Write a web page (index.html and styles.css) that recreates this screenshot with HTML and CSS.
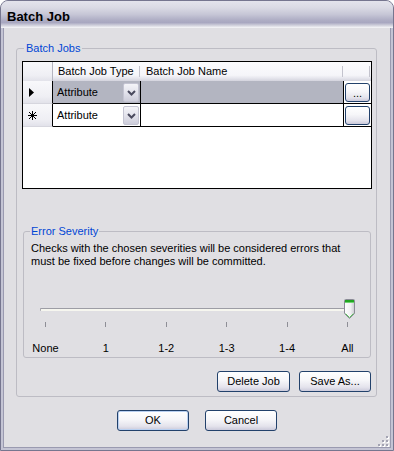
FILE: index.html
```html
<!DOCTYPE html>
<html lang="en">
<head>
  <meta charset="UTF-8">
  <title>Batch Job</title>
  <link rel="stylesheet" href="styles.css">
</head>
<body>
  <div class="window">
    <div class="titlebar">Batch Job</div>

    <div class="client">
      <fieldset class="group jobs">
        <legend>Batch Jobs</legend>

        <!-- job grid -->
        <div class="grid">
          <div class="grid-row grid-head">
            <div class="cell row-head"></div>
            <div class="cell"><span>Batch Job Type</span><i class="divider"></i></div>
            <div class="cell"><span>Batch Job Name</span><i class="divider"></i></div>
            <div class="cell"><span></span><i class="divider"></i></div>
          </div>

          <div class="grid-row selected">
            <div class="cell row-head">
              <svg class="marker" width="6" height="9" viewBox="0 0 6 9"><path d="M0 0 L5 4.5 L0 9 Z" fill="#000"/></svg>
            </div>
            <div class="cell cell-type">
              <span>Attribute</span>
              <span class="combo-btn"><svg width="9" height="6" viewBox="0 0 9 6"><path d="M1 1 L4.5 4.5 L8 1" fill="none" stroke="#4a4a5e" stroke-width="2"/></svg></span>
            </div>
            <div class="cell"></div>
            <div class="cell cell-btn"><button class="btn cell-button">...</button></div>
          </div>

          <div class="grid-row">
            <div class="cell row-head">
              <svg class="marker" width="9" height="9" viewBox="0 0 9 9" shape-rendering="crispEdges"><path d="M4.5 0 V9 M0 4.5 H9 M1 1 L8 8 M8 1 L1 8" stroke="#000" stroke-width="1"/></svg>
            </div>
            <div class="cell cell-type">
              <span>Attribute</span>
              <span class="combo-btn"><svg width="9" height="6" viewBox="0 0 9 6"><path d="M1 1 L4.5 4.5 L8 1" fill="none" stroke="#4a4a5e" stroke-width="2"/></svg></span>
            </div>
            <div class="cell"></div>
            <div class="cell cell-btn"><button class="btn cell-button"></button></div>
          </div>
        </div>

        <fieldset class="group severity">
          <legend>Error Severity</legend>
          <p class="desc">Checks with the chosen severities will be considered errors that must be fixed before changes will be committed.</p>

          <div class="slider">
            <div class="track"></div>
            <svg class="thumb" width="11" height="21" viewBox="0 0 11 21">
              <defs>
                <linearGradient id="thumbFill" x1="0" y1="0" x2="1" y2="0">
                  <stop offset="0" stop-color="#ffffff"/>
                  <stop offset="0.6" stop-color="#f0f0f2"/>
                  <stop offset="1" stop-color="#c9c9d0"/>
                </linearGradient>
              </defs>
              <path d="M1.5 0.5 H9.5 Q10.5 0.5 10.5 1.5 V14.5 L5.5 19.5 L0.5 14.5 V1.5 Q0.5 0.5 1.5 0.5 Z" fill="url(#thumbFill)" stroke="#8b8b96"/>
              <rect x="1" y="1" width="9" height="2" fill="#21a421"/>
              <rect x="1" y="3" width="9" height="1" fill="#6fd66f"/>
              <path d="M1.5 14.5 L5.5 18.5 L9.5 14.5" fill="none" stroke="#5cc65c"/>
            </svg>
          </div>

          <div class="ticks"><i></i><i></i><i></i><i></i><i></i><i></i></div>
          <div class="scale">
            <span>None</span><span>1</span><span>1-2</span><span>1-3</span><span>1-4</span><span>All</span>
          </div>
        </fieldset>

        <div class="group-buttons">
          <button class="btn btn-delete">Delete Job</button>
          <button class="btn btn-save">Save As...</button>
        </div>
      </fieldset>

      <div class="dialog-buttons">
        <button class="btn btn-dialog default">OK</button>
        <button class="btn btn-dialog">Cancel</button>
      </div>

      <!-- size grip -->
      <svg class="grip" width="11" height="11" viewBox="0 0 11 11" shape-rendering="crispEdges">
        <g fill="#ffffff">
          <rect x="9" y="1" width="2" height="2"/>
          <rect x="5" y="5" width="2" height="2"/><rect x="9" y="5" width="2" height="2"/>
          <rect x="1" y="9" width="2" height="2"/><rect x="5" y="9" width="2" height="2"/><rect x="9" y="9" width="2" height="2"/>
        </g>
        <g fill="#a3a3b2">
          <rect x="8" y="0" width="2" height="2"/>
          <rect x="4" y="4" width="2" height="2"/><rect x="8" y="4" width="2" height="2"/>
          <rect x="0" y="8" width="2" height="2"/><rect x="4" y="8" width="2" height="2"/><rect x="8" y="8" width="2" height="2"/>
        </g>
      </svg>
    </div>
  </div>
</body>
</html>
```

FILE: styles.css
```css
* {
  box-sizing: border-box;
}
body {
  margin: 0;
  font-family: "Liberation Sans", Arial, sans-serif;
  font-size: 11px;
  line-height: 13px;
  color: #000;
  background: #fff;
}
.window {
  width: 394px;
  height: 451px;
  display: flex;
  flex-direction: column;
  padding: 0 2px 2px;
  border: 1px solid #76768f;
  border-radius: 8px 8px 0 0;
  background: #c4c4d4;
  overflow: hidden;
}
.titlebar {
  height: 27px;
  margin: 0 -2px;
  padding: 4px 0 0 6px;
  display: flex;
  align-items: center;
  font-size: 13px;
  line-height: 15px;
  font-weight: bold;
  background: linear-gradient(180deg, #e4e4ec 0%, #dadae4 25%, #c6c6d6 50%, #afaec5 70%, #a8a7c0 80%, #cfcfdb 90%, #f8f8fa 100%);
}
.client {
  position: relative;
  flex: 1;
  padding: 14px 12px 0;
  background: #e0dfe3;
  border: 1px solid #9a9ab0;
  border-top: none;
}

/* group boxes */
.group {
  margin: 0;
  min-width: 0;
  border: 1px solid #bdbcc4;
  border-radius: 3px;
}
.group legend {
  padding: 0 2px;
  color: #0046d5;
  line-height: 13px;
}
.jobs {
  width: 361px;
  padding: 6px 4px 4px 5px;
}
.jobs > legend {
  margin-left: 2px;
}
.severity {
  margin: 36px 1px 0;
  padding: 4px 7px 2px;
}
.severity > legend {
  margin-left: -1px;
  padding: 0 1px;
}

/* grid */
.grid {
  height: 128px;
  border: 1px solid #000;
  background: #fff;
}
.grid-row {
  display: grid;
  grid-template-columns: 30px 88px 203px 27px;
  height: 23px;
}
.cell {
  display: flex;
  align-items: center;
  border-right: 1px solid #000;
  border-bottom: 1px solid #000;
}
.cell:last-child {
  border-right: none;
}
.grid-head {
  height: 19px;
  background: linear-gradient(180deg, #fcfcfe 0%, #f5f5f9 70%, #e6e6ed 85%, #d3d3dd 100%);
}
.grid-head .cell {
  justify-content: space-between;
  padding: 0 1px 0 5px;
  border: none;
}
.grid-head .row-head {
  border-right: 1px solid #b4b4bf;
}
.divider {
  width: 1px;
  height: 11px;
  background: #c3c3cd;
}
.row-head {
  padding-left: 6px;
  border-bottom-color: #d6d6de;
  background: linear-gradient(180deg, #f8f8fb 0%, #efeff4 70%, #e2e2ea 100%);
}
.grid-row:last-child .row-head {
  padding-left: 5px;
}
.selected .cell-type,
.selected .cell-type + .cell {
  background: #b3b5c1;
}
.cell-type {
  justify-content: space-between;
  padding: 0 1px 0 4px;
}
.combo-btn {
  align-self: flex-start;
  margin-top: 2px;
  width: 16px;
  height: 19px;
  display: flex;
  align-items: center;
  justify-content: center;
  border: 1px solid #c4c4d2;
  border-radius: 2px;
  background: linear-gradient(180deg, #f4f4f8 0%, #e3e3ec 50%, #cdcdda 100%);
}
.cell-btn {
  align-items: stretch;
  padding: 2px 1px 1px;
}

/* buttons */
.btn {
  padding: 0;
  font: inherit;
  color: #000;
  border: 1px solid #22416b;
  border-radius: 3px;
  background: linear-gradient(180deg, #ffffff 0%, #f6f6f9 45%, #e4e3ec 80%, #cbcadb 100%);
}
.cell-button {
  width: 100%;
  padding-top: 2px;
}
.group-buttons {
  display: flex;
  justify-content: flex-end;
  gap: 9px;
  margin: 13px 1px 0 0;
}
.btn-delete,
.btn-save,
.btn-dialog {
  height: 21px;
}
.btn-delete {
  width: 73px;
}
.btn-save {
  width: 72px;
}
.dialog-buttons {
  display: flex;
  justify-content: center;
  gap: 16px;
  margin-top: 13px;
}
.btn-dialog {
  width: 72px;
}
.default {
  box-shadow: inset 0 0 0 1px #b9d0f1;
}

/* severity slider */
.desc {
  margin: 0;
  max-width: 322px;
}
.slider {
  position: relative;
  height: 22px;
  margin-top: 30px;
  padding-top: 10px;
}
.track {
  height: 3px;
  margin: 0 14px 0 9px;
  border-top: 1px solid #9d9da5;
  border-left: 1px solid #a9a9b0;
  border-radius: 1px 0 0 1px;
  background: #f6f6ef;
}
.thumb {
  position: absolute;
  left: 313px;
  top: 1px;
}
.ticks {
  display: flex;
  justify-content: space-between;
  height: 5px;
  margin: 2px 15px 0 14px;
}
.ticks i {
  width: 1px;
  background: #8e8e96;
}
.scale {
  display: flex;
  justify-content: space-between;
  margin: 15px 15px 0 14px;
}
.scale span {
  width: 1px;
  display: flex;
  justify-content: center;
  white-space: nowrap;
}
.grip {
  position: absolute;
  right: 1px;
  bottom: 0;
}
```
